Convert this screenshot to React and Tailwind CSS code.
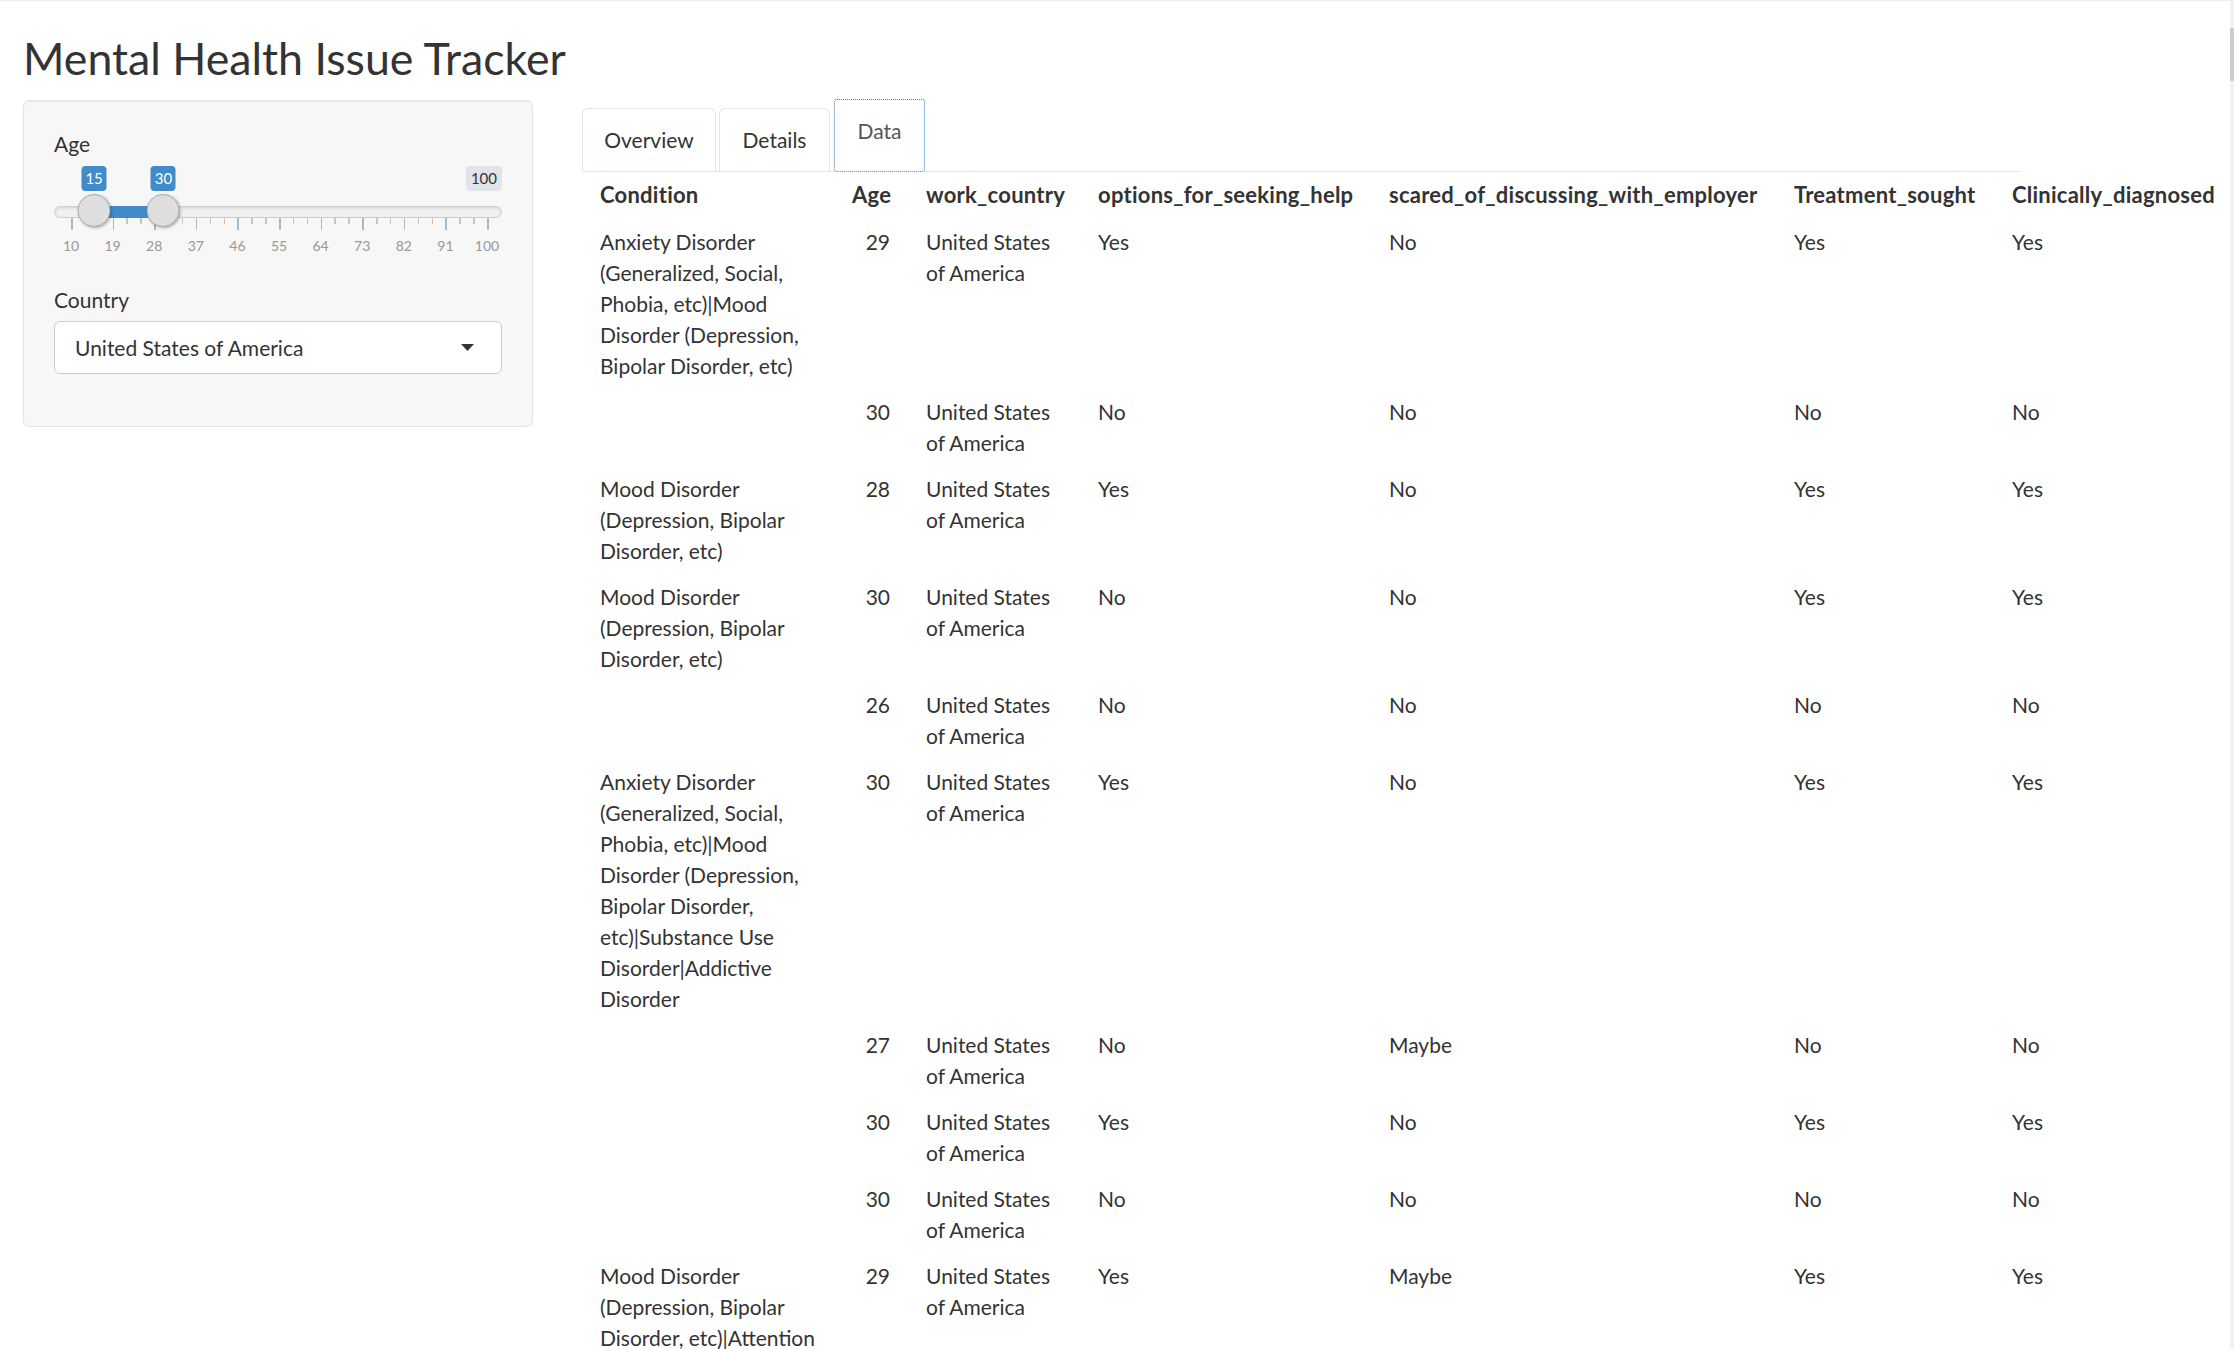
import React from 'react';

const FONT = { fontFamily: 'Lato, "Open Sans", sans-serif' };

const MIN = 10;
const MAX = 100;
// ticks span 416px inside the 449px track, starting 17px in
const pos = (v) => 17 + ((v - MIN) / (MAX - MIN)) * 416;

const USA = ['United States', 'of America'];

const rows = [
  {
    condition: ['Anxiety Disorder', '(Generalized, Social,', 'Phobia, etc)|Mood', 'Disorder (Depression,', 'Bipolar Disorder, etc)'],
    age: 29, help: 'Yes', scared: 'No', treatment: 'Yes', diagnosed: 'Yes',
  },
  { condition: [], age: 30, help: 'No', scared: 'No', treatment: 'No', diagnosed: 'No' },
  {
    condition: ['Mood Disorder', '(Depression, Bipolar', 'Disorder, etc)'],
    age: 28, help: 'Yes', scared: 'No', treatment: 'Yes', diagnosed: 'Yes',
  },
  {
    condition: ['Mood Disorder', '(Depression, Bipolar', 'Disorder, etc)'],
    age: 30, help: 'No', scared: 'No', treatment: 'Yes', diagnosed: 'Yes',
  },
  { condition: [], age: 26, help: 'No', scared: 'No', treatment: 'No', diagnosed: 'No' },
  {
    condition: [
      'Anxiety Disorder', '(Generalized, Social,', 'Phobia, etc)|Mood', 'Disorder (Depression,',
      'Bipolar Disorder,', 'etc)|Substance Use', 'Disorder|Addictive', 'Disorder',
    ],
    age: 30, help: 'Yes', scared: 'No', treatment: 'Yes', diagnosed: 'Yes',
  },
  { condition: [], age: 27, help: 'No', scared: 'Maybe', treatment: 'No', diagnosed: 'No' },
  { condition: [], age: 30, help: 'Yes', scared: 'No', treatment: 'Yes', diagnosed: 'Yes' },
  { condition: [], age: 30, help: 'No', scared: 'No', treatment: 'No', diagnosed: 'No' },
  {
    condition: ['Mood Disorder', '(Depression, Bipolar', 'Disorder, etc)|Attention', 'Deficit Hyperactivity', 'Disorder'],
    age: 29, help: 'Yes', scared: 'Maybe', treatment: 'Yes', diagnosed: 'Yes',
  },
];

const Lines = ({ lines }) =>
  lines.map((l, i) => (
    <React.Fragment key={i}>
      {l}
      {i < lines.length - 1 && <br />}
    </React.Fragment>
  ));

function AgeSlider({ from, to }) {
  const ticks = Array.from({ length: 31 }, (_, i) => i);
  const labels = Array.from({ length: 11 }, (_, i) => MIN + i * 9);

  return (
    <div className="relative mt-[7.5px] h-[90px]">
      {[from, to].map((v) => (
        <span
          key={'b' + v}
          className="absolute top-0 h-[25px] w-[25px] -translate-x-1/2 rounded-[4px] bg-[#428bca] text-center text-[15px] leading-[25px] text-white"
          style={{ left: pos(v) }}
        >
          {v}
        </span>
      ))}
      <span className="absolute right-0 top-0 h-[25px] rounded-[4px] bg-[#e1e4e9] px-[5px] text-[15px] leading-[25px] text-[#333]">
        100
      </span>

      <div className="absolute left-0 right-0 top-[40px] h-[12px] rounded-full border border-[#d0d0d0] bg-[#f0f0f0] shadow-[inset_0_1px_3px_rgba(0,0,0,0.12)]" />
      <div
        className="absolute top-[40px] h-[12px] bg-[#428bca]"
        style={{ left: pos(from), width: pos(to) - pos(from) }}
      />

      {ticks.map((i) => (
        <div
          key={'t' + i}
          className={
            i % 3 === 0
              ? 'absolute top-[52px] h-[12px] w-[1.5px] bg-[#98bddd]'
              : 'absolute top-[52px] h-[6px] w-[1.5px] bg-[#c4c4c4]'
          }
          style={{ left: 17 + (i * 416) / 30 }}
        />
      ))}

      {[from, to].map((v) => (
        <div
          key={'h' + v}
          className="absolute top-[28px] h-[33px] w-[33px] -translate-x-1/2 rounded-full border border-[#acacac] bg-[#dedede] shadow-[1px_1px_3px_rgba(0,0,0,0.3)]"
          style={{ left: pos(v) }}
        />
      ))}

      {labels.map((v) => (
        <span
          key={'l' + v}
          className="absolute top-[71px] -translate-x-1/2 text-[14px] leading-[18px] text-[#999]"
          style={{ left: pos(v) }}
        >
          {v}
        </span>
      ))}
    </div>
  );
}

function App() {
  const cell = 'px-[18px] py-[7.5px] align-top whitespace-nowrap';
  const head = 'px-[18px] pt-[7px] pb-[9px] text-left text-[22px] font-bold tracking-[0.25px] whitespace-nowrap';

  return (
    <div className="flex h-screen overflow-hidden border-t border-[#eeeeee] bg-white text-[21px] leading-[31px] text-[#333]" style={FONT}>
      <div className="min-w-0 flex-1 pl-[23px]">
        <h1 className="mt-[33px] text-[44.7px] font-normal leading-[1.1] text-[#333]">
          Mental Health Issue Tracker
        </h1>

        <div className="mt-[16.5px] flex items-start">
          {/* sidebar */}
          <aside className="w-[510px] shrink-0 rounded-[6px] border border-[#e3e3e3] bg-[#f7f7f7] px-[30px] pb-[52px] pt-[27px] shadow-[inset_0_1px_1px_rgba(0,0,0,0.05)]">
            <label className="block">Age</label>
            <AgeSlider from={15} to={30} />

            <label className="mt-[28px] block">Country</label>
            <div className="mt-[5.5px] flex h-[53px] items-center justify-between rounded-[6px] border border-[#cccccc] bg-white pl-[20px] pr-[27px] text-[#333]">
              <span>United States of America</span>
              <svg width="13" height="7" viewBox="0 0 13 7">
                <path d="M0 0h13L6.5 7z" fill="#333" />
              </svg>
            </div>
          </aside>

          {/* main */}
          <main className="-mt-px ml-[49px] min-w-0 flex-1">
            <nav className="flex w-[1438px] items-end gap-[3px] border-b border-[#e2e2e2]">
              <div className="h-[63px] w-[134px] rounded-t-[6px] border border-b-0 border-[#e6e6e6] pt-[15px] text-center text-[#333]">
                Overview
              </div>
              <div className="h-[63px] w-[111px] rounded-t-[6px] border border-b-0 border-[#e6e6e6] pt-[15px] text-center text-[#333]">
                Details
              </div>
              <div className="-mb-px ml-px h-[73px] w-[91px] rounded-[3px] border border-dotted border-[#2a7fe0] bg-white pt-[15.5px] text-center text-[#555]">
                Data
              </div>
            </nav>

            <table className="w-[1650px] table-fixed">
              <colgroup>
                <col className="w-[252px]" />
                <col className="w-[74px]" />
                <col className="w-[172px]" />
                <col className="w-[291px]" />
                <col className="w-[405px]" />
                <col className="w-[218px]" />
                <col className="w-[238px]" />
              </colgroup>
              <thead>
                <tr>
                  <th className={head}>Condition</th>
                  <th className={head + ' !text-right'}>Age</th>
                  <th className={head}>work_country</th>
                  <th className={head}>options_for_seeking_help</th>
                  <th className={head}>scared_of_discussing_with_employer</th>
                  <th className={head}>Treatment_sought</th>
                  <th className={head}>Clinically_diagnosed</th>
                </tr>
              </thead>
              <tbody>
                {rows.map((r, i) => (
                  <tr key={i}>
                    <td className={cell}>
                      <Lines lines={r.condition} />
                    </td>
                    <td className={cell + ' text-right'}>{r.age}</td>
                    <td className={cell}>
                      <Lines lines={USA} />
                    </td>
                    <td className={cell}>{r.help}</td>
                    <td className={cell}>{r.scared}</td>
                    <td className={cell}>{r.treatment}</td>
                    <td className={cell}>{r.diagnosed}</td>
                  </tr>
                ))}
              </tbody>
            </table>
          </main>
        </div>
      </div>

      {/* thin scrollbar at the right edge */}
      <div className="w-[4px] shrink-0 bg-[#f1f1f1] pt-[27px]">
        <div className="h-[53px] bg-[#cdcdcd]" />
      </div>
    </div>
  );
}

export default App;
